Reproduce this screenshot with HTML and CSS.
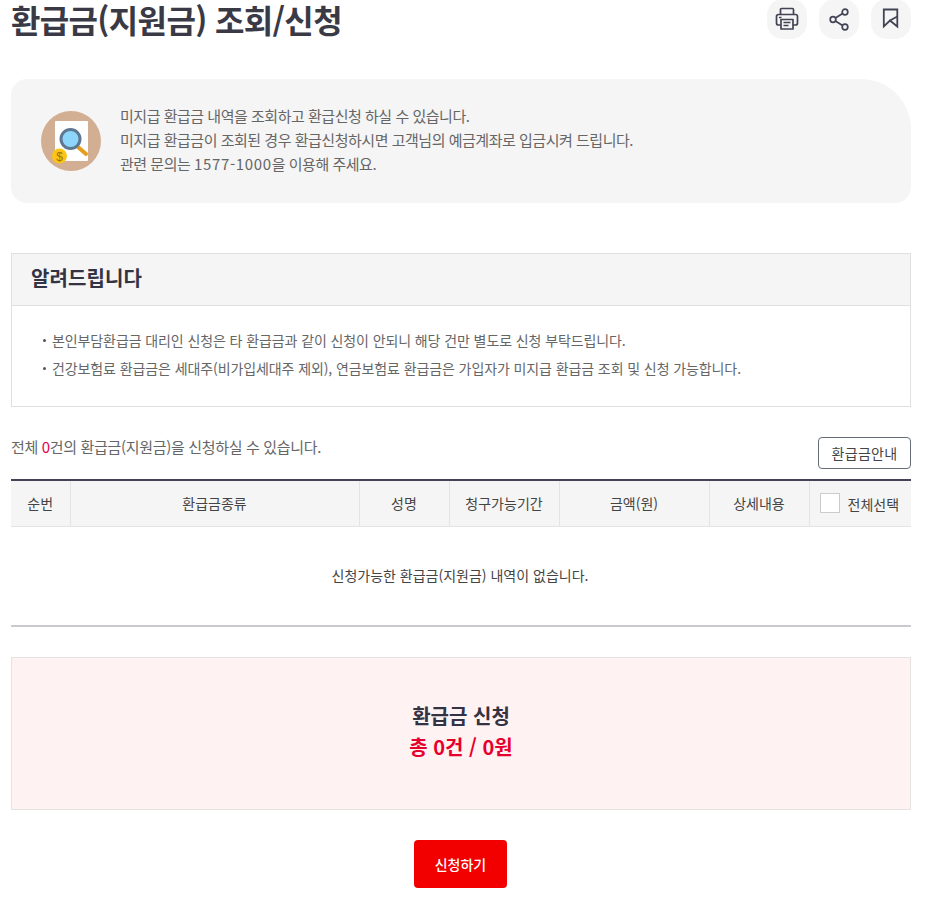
FILE: index.html
```html
<!DOCTYPE html>
<html lang="ko">
<head>
<meta charset="utf-8">
<title>환급금(지원금) 조회/신청</title>
<link rel="stylesheet" href="styles.css">
</head>
<body>
<main class="page">
  <header class="head">
    <h1 class="title">환급금(지원금) 조회/신청</h1>
    <div class="tools">
      <button class="tool" aria-label="인쇄"><svg width="24" height="24" viewBox="0 0 24 24" fill="none" stroke="#434356" stroke-width="1.7" stroke-linejoin="round"><path d="M5.500 7.500V2.500a1 1 0 0 1 1-1h11a1 1 0 0 1 1 1v5"/><path d="M6 18H3.500a2 2 0 0 1-2-2V9.500a2 2 0 0 1 2-2h17a2 2 0 0 1 2 2V16a2 2 0 0 1-2 2H18"/><path d="M6 12.500h12v9.500H6z"/><path d="M8.500 15.500h7M8.500 18.500h5M4 10.500h2.500"/></svg></button>
      <button class="tool" aria-label="공유"><svg width="24" height="24" viewBox="0 0 24 24" fill="none" stroke="#434356" stroke-width="1.7"><circle cx="18" cy="5" r="2.800"/><circle cx="6" cy="12.500" r="2.800"/><circle cx="18" cy="20" r="2.800"/><path d="M8.400 11l7.200-4.500M8.400 14l7.200 4.500"/></svg></button>
      <button class="tool" aria-label="즐겨찾기"><svg width="24" height="24" viewBox="0 0 24 24" fill="none" stroke="#434356" stroke-width="1.800" stroke-linejoin="miter"><path d="M4.800 2.500H18.300V19.500L11 13.500 4.800 19.500Z"/><path d="M18.300 9.500L11 13.500"/></svg></button>
    </div>
  </header>

  <section class="intro">
    <svg class="intro-icon" width="60" height="60" viewBox="0 0 60 60">
      <circle cx="30" cy="30" r="30" fill="#d2ae92"/>
      <rect x="14" y="10" width="33" height="40" rx="1" fill="#fff"/>
      <path d="M37 36l8 7" stroke="#e59d1c" stroke-width="4" stroke-linecap="round"/>
      <circle cx="29.500" cy="28" r="9.500" fill="#8ed5fb" stroke="#5d7890" stroke-width="3"/>
      <circle cx="18.500" cy="45" r="7.500" fill="#fcc516"/>
      <text x="18.500" y="49.500" class="coin">$</text>
    </svg>
    <div class="intro-text">
      <p>미지급 환급금 내역을 조회하고 환급신청 하실 수 있습니다.</p>
      <p>미지급 환급금이 조회된 경우 환급신청하시면 고객님의 예금계좌로 입금시켜 드립니다.</p>
      <p>관련 문의는 <span class="tel">1577-1000</span>을 이용해 주세요.</p>
    </div>
  </section>

  <section class="notice">
    <h2 class="notice-title">알려드립니다</h2>
    <ul class="notice-list">
      <li>본인부담환급금 대리인 신청은 타 환급금과 같이 신청이 안되니 해당 건만 별도로 신청 부탁드립니다.</li>
      <li>건강보험료 환급금은 세대주(비가입세대주 제외), 연금보험료 환급금은 가입자가 미지급 환급금 조회 및 신청 가능합니다.</li>
    </ul>
  </section>

  <div class="summary">
    <p class="count">전체 <em>0</em>건의 환급금(지원금)을 신청하실 수 있습니다.</p>
    <button class="guide">환급금안내</button>
  </div>

  <table class="grid">
    <colgroup>
      <col class="c1"><col class="c2"><col class="c3"><col class="c4"><col class="c5"><col class="c6"><col class="c7">
    </colgroup>
    <thead>
      <tr>
        <th>순번</th><th>환급금종류</th><th>성명</th><th>청구가능기간</th><th>금액(원)</th><th>상세내용</th>
        <th><label class="all"><span class="box"></span><span class="all-label">전체선택</span></label></th>
      </tr>
    </thead>
    <tbody>
      <tr><td colspan="7">신청가능한 환급금(지원금) 내역이 없습니다.</td></tr>
    </tbody>
  </table>

  <section class="total">
    <p class="total-title">환급금 신청</p>
    <p class="total-sum">총 0건 / 0원</p>
  </section>

  <div class="actions"><button class="submit">신청하기</button></div>
</main>
</body>
</html>
```
FILE: styles.css
```css
* { box-sizing: border-box; }
html, body { margin: 0; padding: 0; background: #fff; }
body { font-family: "Noto Sans CJK KR", "Noto Sans", sans-serif; color: #333; overflow: hidden; height: 899px; }
p, h1, h2, ul { margin: 0; padding: 0; }
button { font-family: inherit; cursor: pointer; }

.page { width: 900px; margin: 0 0 0 11px; }

.head { display: flex; justify-content: space-between; align-items: flex-start; height: 79px; }
.title { font-size: 32px; font-weight: 700; line-height: 38px; letter-spacing: -0.65px; color: #3a3a46; }
.tools { display: flex; gap: 12px; margin-top: -1px; }
.tool { width: 40px; height: 40px; border: 0; border-radius: 16px; background: #f5f5f5; padding: 0; display: flex; align-items: center; justify-content: center; }

.intro { display: flex; align-items: center; gap: 19px; height: 124px; padding-left: 30px; background: #f5f5f5; border-radius: 16px 50px 16px 16px; }
.intro-icon { flex: none; }
.coin { font-size: 12px; fill: #a0720c; text-anchor: middle; font-family: "Liberation Sans", sans-serif; }
.intro-text { font-size: 15px; line-height: 24px; color: #666; letter-spacing: -0.48px; padding-bottom: 3px; }
.tel { letter-spacing: 0.65px; }

.notice { margin-top: 50px; border: 1px solid #e0e0e0; height: 154px; }
.notice-title { height: 52px; line-height: 48px; padding-left: 19px; font-size: 20px; font-weight: 700; letter-spacing: 0.1px; background: #f5f5f5; border-bottom: 1px solid #e0e0e0; color: #333344; }
.notice-list { list-style: none; padding: 20px 0 0 28px; font-size: 14px; line-height: 28px; color: #666; letter-spacing: -0.1px; }
.notice-list li { position: relative; padding-left: 12px; }
.notice-list li::before { content: ""; position: absolute; left: 3px; top: 13px; width: 3px; height: 3px; border-radius: 50%; background: #555; }

.summary { display: flex; justify-content: space-between; align-items: flex-start; margin-top: 30px; height: 42px; }
.count { font-size: 15px; line-height: 20px; color: #666; letter-spacing: -0.33px; }
.count em { font-style: normal; color: #e6004c; }
.guide { width: 93px; height: 32px; border: 1px solid #666b78; border-radius: 4px; background: #fff; font-size: 14px; letter-spacing: 0.3px; color: #444; padding: 0; }

.grid { width: 900px; border-collapse: collapse; table-layout: fixed; border-top: 2px solid #434356; border-bottom: 2px solid #c9c9d1; }
.c1 { width: 59px; } .c2 { width: 289px; } .c3 { width: 90px; } .c4 { width: 110px; } .c5 { width: 150px; } .c6 { width: 100px; } .c7 { width: 102px; }
.grid th { height: 46px; padding: 0; font-size: 14px; font-weight: 400; color: #444; background: #f5f5f5; border-left: 1px solid #e4e4e4; border-bottom: 1px solid #e4e4e4; letter-spacing: 0; }
.grid th:first-child { border-left: 0; }
.grid td { height: 100px; padding: 0 2px 2px 0; text-align: center; font-size: 14px; color: #444; letter-spacing: 0; }
.all { display: flex; align-items: center; padding-left: 10px; }
.box { width: 20px; height: 20px; background: #fff; border: 1px solid #ccc; }
.all-label { margin-left: 8px; padding-top: 1px; }

.total { margin-top: 30px; height: 153px; background: #fff2f2; border: 1px solid #e6e2e2; text-align: center; padding-top: 42px; font-size: 20px; line-height: 31px; font-weight: 700; }
.total-title { color: #333344; }
.total-sum { color: #e6002d; }

.actions { display: flex; justify-content: center; margin-top: 30px; padding-right: 1px; }
.submit { width: 93px; height: 48px; border: 0; border-radius: 4px; background: #f20000; color: #fff; font-size: 14px; font-weight: 500; }
```
